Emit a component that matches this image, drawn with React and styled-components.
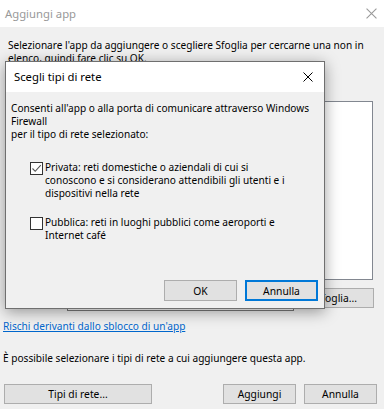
import React from "react";
import styled, { createGlobalStyle } from "styled-components";

const Global = createGlobalStyle`
  html, body { margin: 0; padding: 0; background: #f0f0f0; }
  body { font-family: "Noto Sans", "Liberation Sans", sans-serif; font-size: 10.1px; color: #000; }
  * { box-sizing: border-box; }
`;

const Window = styled.div`
  position: relative;
  width: 384px;
  height: 409px;
  background: #f0f0f0;
  display: flex;
  flex-direction: column;
  overflow: hidden;
`;

const TitleBar = styled.div`
  height: ${(p) => p.$h}px;
  flex: none;
  background: #fff;
  display: flex;
  align-items: center;
  justify-content: space-between;
  padding: 0 ${(p) => p.$padR}px 0 ${(p) => p.$padL}px;
`;

const TitleText = styled.span`
  font-size: 11.3px;
  color: ${(p) => (p.$active ? "#000" : "#999")};
  line-height: 14px;
`;

const CloseIcon = ({ color, size = 10 }) => (
  <svg width={size} height={size} viewBox="0 0 10 10" style={{ display: "block" }}>
    <path d="M0.5 0.5 L9.5 9.5 M9.5 0.5 L0.5 9.5" stroke={color} strokeWidth="1" fill="none" />
  </svg>
);

const Para = styled.div`
  margin: ${(p) => p.$mt}px 0 0 ${(p) => p.$ml}px;
  line-height: 13px;
  white-space: nowrap;
`;

const ListBox = styled.div`
  margin: 36px 11px 0 8px;
  height: 179px;
  background: #fff;
  border: 1px solid #828790;
`;

const PathRow = styled.div`
  margin-top: 8px;
  display: flex;
  align-items: flex-start;
  padding-left: 8px;
  height: 23px;
`;

const PathLabel = styled.span`
  width: 59px;
  line-height: 20px;
`;

const TextBox = styled.div`
  width: 227px;
  height: 23px;
  background: #fff;
  border: 1px solid #7a7a7a;
`;

const Button = styled.button`
  font: inherit;
  font-size: 10.3px;
  color: #000;
  width: ${(p) => p.$w}px;
  height: ${(p) => p.$h || 21}px;
  margin-left: ${(p) => p.$ml || 0}px;
  background: #e1e1e1;
  border: ${(p) => (p.$default ? "2px solid #0078d7" : "1px solid #adadad")};
  padding: 0;
  flex: none;
`;

const Link = styled.a`
  display: block;
  margin: 9px 0 0 3px;
  line-height: 13px;
  color: #0066cc;
  text-decoration: underline;
`;

const BottomRow = styled.div`
  margin-top: 19px;
  display: flex;
  padding: 0 7px 0 4px;
`;

const Spacer = styled.div`
  flex: 1;
`;

const Dialog = styled.div`
  position: absolute;
  left: 5px;
  top: 61px;
  width: 320px;
  height: 248px;
  background: #f0f0f0;
  border: 1px solid #6f6f6f;
  box-shadow: 0 3px 14px rgba(0, 0, 0, 0.38);
  display: flex;
  flex-direction: column;
`;

const DialogBody = styled.div`
  flex: 1;
  padding: 10px 0 0 5px;
`;

const Option = styled.label`
  display: flex;
  align-items: flex-start;
  margin: ${(p) => p.$mt}px 0 0 19px;
`;

const Box = styled.span`
  width: 13px;
  height: 13px;
  flex: none;
  margin-top: 1px;
  border: 1px solid #333;
  background: #fff;
  display: flex;
  align-items: center;
  justify-content: center;
`;

const OptionText = styled.span`
  margin-left: 2px;
  line-height: 13px;
  white-space: nowrap;
`;

const DialogFooter = styled.div`
  display: flex;
  justify-content: flex-end;
  gap: 8px;
  padding: 0 6px 7px 0;
`;

const Check = () => (
  <svg width="11" height="11" viewBox="0 0 11 11">
    <path d="M1.5 5.5 L4.2 8.3 L9.8 2.2" stroke="#555" strokeWidth="1.1" fill="none" />
  </svg>
);

const Checkbox = ({ checked }) => <Box>{checked && <Check />}</Box>;

export default function App() {
  return (
    <>
      <Global />
      <Window>
        <TitleBar $h={27} $padL={5} $padR={7}>
          <TitleText>Aggiungi app</TitleText>
          <CloseIcon color="#9a9a9a" size={11} />
        </TitleBar>
        <Para $mt={12} $ml={8}>
          Selezionare l'app da aggiungere o scegliere Sfoglia per cercarne una non in
          <br />
          elenco, quindi fare clic su OK.
        </Para>
        <ListBox />
        <PathRow>
          <PathLabel>Percorso:</PathLabel>
          <TextBox />
          <Button $w={75} $h={20} $ml={5}>Sfoglia...</Button>
        </PathRow>
        <Link href="#">Rischi derivanti dallo sblocco di un'app</Link>
        <Para $mt={19} $ml={3}>È possibile selezionare i tipi di rete a cui aggiungere questa app.</Para>
        <BottomRow>
          <Button $w={148} $h={20}>Tipi di rete...</Button>
          <Spacer />
          <Button $w={73} $h={20}>Aggiungi</Button>
          <Button $w={73} $h={20} $ml={8}>Annulla</Button>
        </BottomRow>

        <Dialog>
          <TitleBar $active $h={30} $padL={8} $padR={11}>
            <TitleText $active>Scegli tipi di rete</TitleText>
            <CloseIcon color="#000" size={10} />
          </TitleBar>
          <DialogBody>
            <Para $mt={0} $ml={0}>
              Consenti all'app o alla porta di comunicare attraverso Windows
              <br />
              Firewall
              <br />
              per il tipo di rete selezionato:
            </Para>
            <Option $mt={20}>
              <Checkbox checked />
              <OptionText>
                Privata: reti domestiche o aziendali di cui si
                <br />
                conoscono e si considerano attendibili gli utenti e i
                <br />
                dispositivi nella rete
              </OptionText>
            </Option>
            <Option $mt={16}>
              <Checkbox />
              <OptionText>
                Pubblica: reti in luoghi pubblici come aeroporti e
                <br />
                Internet café
              </OptionText>
            </Option>
          </DialogBody>
          <DialogFooter>
            <Button $w={73}>OK</Button>
            <Button $w={73} $default>Annulla</Button>
          </DialogFooter>
        </Dialog>
      </Window>
    </>
  );
}
